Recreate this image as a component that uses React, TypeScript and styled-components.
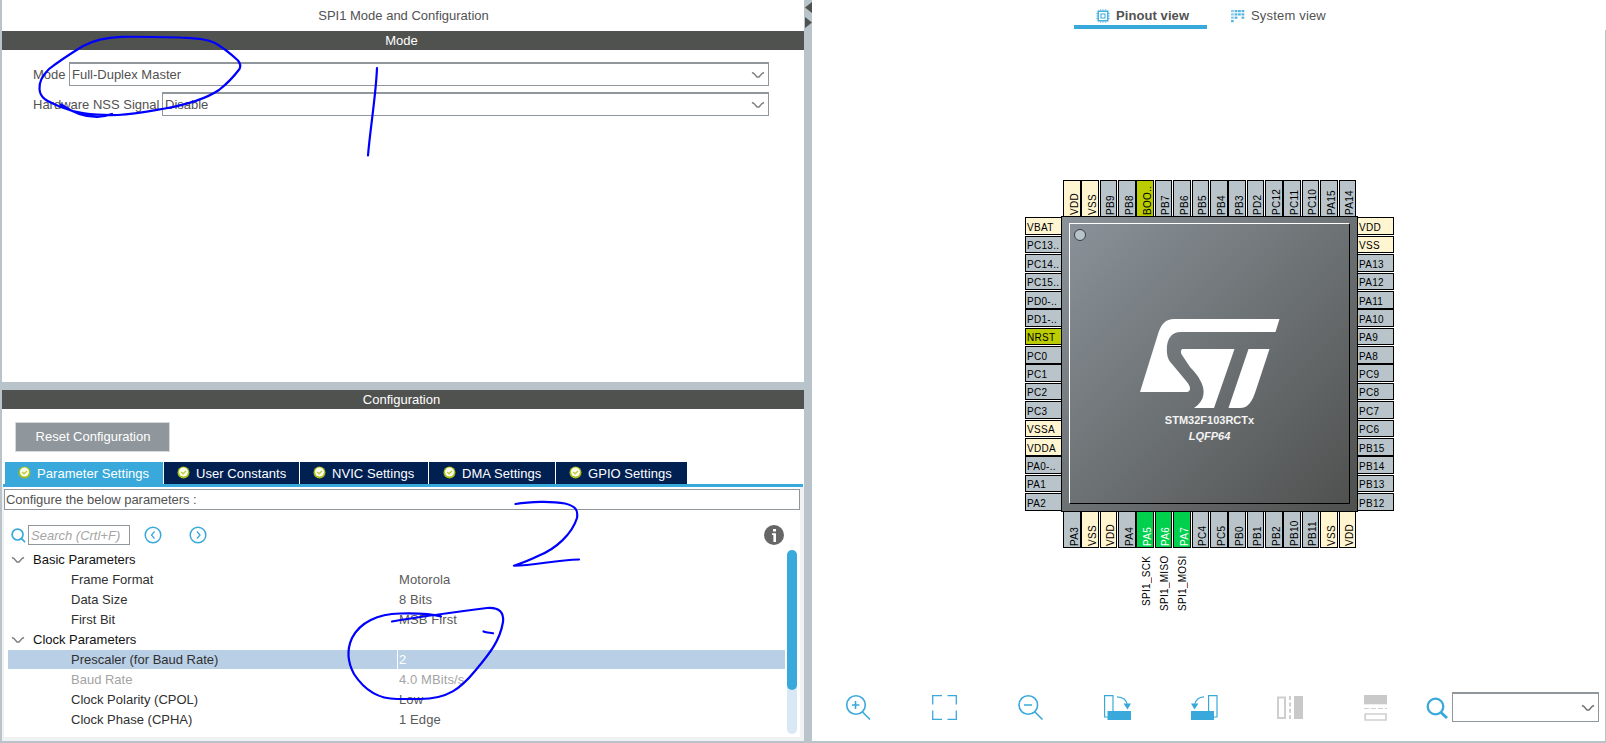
import React from "react";
import styled, { createGlobalStyle, css } from "styled-components";

const Global = createGlobalStyle`
  * { box-sizing: border-box; }
  html, body { margin: 0; padding: 0; }
  body {
    font-family: "Liberation Sans", Arial, sans-serif;
    font-size: 13px;
    color: #525252;
    background: #fff;
  }
`;

const blue = "#39a9dc";
const steel = "#b8c4ca";
const line = "#8f979d";
const dark = "#505250";
const navy = "#002052";

/* ---------- shell ---------- */

const Window = styled.div`
  position: relative;
  display: flex;
  width: 1606px;
  height: 743px;
  overflow: hidden;
  background: ${steel};
`;

const LeftColumn = styled.div`
  display: flex;
  flex-direction: column;
  width: 802px;
  margin-left: 2px;
  height: 741px;
`;

const Splitter = styled.div`
  width: 8px;
  padding: 2px 0 0 1px;
  svg { display: block; }
`;

const RightColumn = styled.div`
  display: flex;
  flex-direction: column;
  width: 794px;
  height: 741px;
  background: #fff;
`;

const PanelTitle = styled.div`
  height: 31px;
  line-height: 31px;
  text-align: center;
  background: #fff;
  padding-left: 1px;
`;

const SectionBar = styled.div`
  height: 19px;
  line-height: 19px;
  text-align: center;
  color: #fff;
  background: ${dark};
  padding-right: 3px;
`;

/* ---------- mode ---------- */

const ModeBody = styled.div`
  height: 332px;
  padding: 12px 35px 0 31px;
  background: #fff;
  display: flex;
  flex-direction: column;
  gap: 6px;
`;

const Field = styled.div`
  display: flex;
  align-items: center;
  height: 24px;
`;

const FieldLabel = styled.label<{ $w: number }>`
  width: ${(p) => p.$w}px;
  white-space: nowrap;
`;

const Combo = styled.div<{ $h?: number }>`
  display: flex;
  flex: 1;
  align-items: center;
  justify-content: space-between;
  height: ${(p) => p.$h ?? 24}px;
  border: 1px solid ${line};
  border-top-width: 2px;
  padding: 0 3px 0 2px;
  background: #fff;
`;

/* ---------- configuration ---------- */

const ConfigPanel = styled.div`
  margin-top: 8px;
  flex: 1;
  display: flex;
  flex-direction: column;
  background: #fff;
`;

const ResetButton = styled.button`
  width: 155px;
  height: 30px;
  margin: 13px 0 0 13px;
  padding: 0 0 1px 1px;
  border: 1px solid #d5d9dc;
  background: #90979c;
  color: #fff;
  font: inherit;
`;

const Tabs = styled.div`
  display: flex;
  gap: 1px;
  margin: 10px 0 0 3px;
  height: 22px;
  letter-spacing: 0.05px;
`;

const Tab = styled.div<{ $w: number; $active?: boolean; $pad: number }>`
  display: flex;
  align-items: center;
  gap: 6px;
  width: ${(p) => p.$w}px;
  padding-left: ${(p) => p.$pad}px;
  color: #fff;
  white-space: nowrap;
  background: ${(p) => (p.$active ? blue : navy)};
`;

const TabBody = styled.div`
  flex: 1;
  display: flex;
  flex-direction: column;
  border: solid #f0f1f3;
  border-width: 0 4px 4px 2px;
`;

const TabLine = styled.div`
  height: 3px;
  margin: 0 1px;
  background: ${blue};
`;

const Hint = styled.div`
  height: 21px;
  margin-top: 2px;
  border: 1px solid ${line};
  line-height: 19px;
  padding-left: 1px;
  letter-spacing: -0.05px;
`;

const SearchRow = styled.div`
  display: flex;
  align-items: center;
  height: 20px;
  margin-top: 15px;
  padding-left: 7px;
  svg { display: block; flex: none; }
`;

const SearchInput = styled.div`
  width: 102px;
  height: 20px;
  margin: 0 14px 0 2px;
  border: 1px solid ${line};
  padding-left: 2px;
  line-height: 19px;
  font-style: italic;
  color: #a5a5a5;
  white-space: nowrap;
`;

const Spacer = styled.div<{ $w?: number }>`
  ${(p) => (p.$w ? css`width: ${p.$w}px;` : css`flex: 1;`)}
`;

const TreeArea = styled.div`
  display: flex;
  margin-top: 5px;
  padding-left: 4px;
`;

const Tree = styled.div`
  width: 777px;
`;

const Row = styled.div<{ $selected?: boolean; $muted?: boolean }>`
  display: flex;
  height: 19px;
  margin-bottom: 1px;
  line-height: 19px;
  background: ${(p) => (p.$selected ? "#b9cfe6" : "transparent")};
  color: ${(p) => (p.$muted ? "#a3a3a3" : "#303030")};
`;

const GroupRow = styled(Row)`
  align-items: center;
  gap: 8px;
  padding-left: 3px;
  color: #111;
`;

const NameCell = styled.div<{ $selected?: boolean }>`
  width: 390px;
  padding-left: 63px;
  border-right: 1px solid ${(p) => (p.$selected ? "#fff" : "transparent")};
`;

const ValueCell = styled.div<{ $tone: string }>`
  padding-left: 1px;
  letter-spacing: 0.1px;
  color: ${(p) => p.$tone};
`;

const ScrollTrack = styled.div`
  width: 10px;
  height: 184px;
  margin-left: 2px;
  border-radius: 5px;
  background: #d9e8f5;
`;

const ScrollThumb = styled.div`
  height: 140px;
  border-radius: 5px;
  background: ${blue};
`;

/* ---------- pinout ---------- */

const ViewTabs = styled.div`
  display: flex;
  height: 30px;
  padding-left: 262px;
`;

const ViewTab = styled.div<{ $active?: boolean }>`
  display: flex;
  align-items: center;
  gap: 6px;
  width: ${(p) => (p.$active ? 133 : 140)}px;
  height: 29px;
  padding: 6px 0 0 ${(p) => (p.$active ? 22 : 24)}px;
  border-bottom: 4px solid ${(p) => (p.$active ? blue : "transparent")};
  font-weight: ${(p) => (p.$active ? 700 : 400)};
  letter-spacing: ${(p) => (p.$active ? 0.08 : 0.18)}px;
  white-space: nowrap;
`;

const Canvas = styled.div`
  flex: 1;
  border-right: 1px solid ${steel};
  padding: 150px 0 0 213px;
`;

const Package = styled.div`
  display: grid;
  grid-template-columns: 36px 297px 36px;
  grid-template-rows: 36px 296px 36px 72px;
`;

const PinColumn = styled.div<{ $side: "left" | "right" }>`
  grid-row: 2;
  grid-column: ${(p) => (p.$side === "left" ? 1 : 3)};
  display: grid;
  grid-template-rows: 19px 18px 19px 18px 18px 19px 18px 18px 19px 18px 19px 18px 18px 19px 18px 18px;
  padding-top: 1px;
  margin-left: ${(p) => (p.$side === "left" ? 0 : -1)}px;
  margin-right: ${(p) => (p.$side === "left" ? -1 : 0)}px;
`;

const PinRow = styled.div<{ $side: "top" | "bottom" }>`
  grid-row: ${(p) => (p.$side === "top" ? 1 : 3)};
  grid-column: 2;
  display: grid;
  grid-template-columns: 18px 19px 18px 18px 19px 18px 19px 18px 18px 19px 18px 18px 19px 18px 19px 17px;
  padding-left: 2px;
  margin-top: ${(p) => (p.$side === "top" ? 0 : -1)}px;
  margin-bottom: ${(p) => (p.$side === "top" ? -1 : 0)}px;
`;

const pinTones = {
  io: ["#b8c4ca", "#000"],
  power: ["#fff5d0", "#000"],
  boot: ["#bbcc01", "#000"],
  used: ["#00d04b", "#fff"],
} as const;
type Tone = keyof typeof pinTones;

const pinBase = css<{ $tone: Tone; $size: number }>`
  border: 1px solid #000;
  background: ${(p) => pinTones[p.$tone][0]};
  color: ${(p) => pinTones[p.$tone][1]};
  font-size: 10px;
  letter-spacing: 0.3px;
  white-space: nowrap;
`;

const SidePin = styled.div<{ $tone: Tone; $size: number }>`
  ${pinBase}
  height: ${(p) => p.$size}px;
  line-height: ${(p) => p.$size * 2 - 16}px;
  padding-left: 1px;
`;

const EdgePin = styled.div<{ $tone: Tone; $size: number }>`
  ${pinBase}
  width: ${(p) => p.$size}px;
  line-height: ${(p) => p.$size}px;
  writing-mode: vertical-rl;
  transform: rotate(180deg);
  padding: 1px ${(p) => p.$size - 16.5}px 0 0;
`;

const Die = styled.div`
  grid-row: 2;
  grid-column: 2;
  position: relative;
  border: 1px solid #000;
  background: linear-gradient(135deg, #8b939a 0%, #4e504e 100%);
  padding: 6px 7px 7px 7px;
`;

const Bevel = styled.div`
  height: 281px;
  border: 1px solid;
  border-color: #fff #000 #000 #fff;
  display: flex;
  flex-direction: column;
  align-items: center;
  color: #f4f4f4;
  font-weight: 700;
  font-size: 11px;
  svg { display: block; }
`;

const PinOneMark = styled.div`
  position: absolute;
  left: 12px;
  top: 12px;
  width: 12px;
  height: 12px;
  border-radius: 50%;
  border: 1px solid #3a3d3f;
  background: ${steel};
`;

const PartName = styled.div`
  margin-top: 5px;
  line-height: 14px;
`;

const PackageName = styled.div`
  margin-top: 2px;
  line-height: 14px;
  font-style: italic;
`;

const SignalRow = styled.div`
  grid-row: 4;
  grid-column: 2;
  display: flex;
  align-items: flex-start;
  padding: 8px 0 0 77px;
`;

const Signal = styled.div<{ $w: number }>`
  width: ${(p) => p.$w}px;
  height: 56px;
  line-height: 18px;
  writing-mode: vertical-rl;
  transform: rotate(180deg);
  text-align: right;
  font-size: 10px;
  letter-spacing: 0.3px;
  color: #000;
  white-space: nowrap;
`;

/* ---------- toolbar ---------- */

const Toolbar = styled.div`
  display: grid;
  grid-template-columns: 86px 86px 86px 87px 86px 87px 62px 26px 147px;
  height: 50px;
  padding: 1px 0 0 34px;
  border-right: 1px solid ${steel};
`;

const ToolIcon = styled.svg`
  display: block;
  width: 28px;
  height: 28px;
  margin-top: 3px;
  overflow: visible;
`;

const Ink = styled.svg`
  position: absolute;
  left: 0;
  top: 0;
  pointer-events: none;
`;

/* ---------- icons ---------- */

const Chevron = ({ color = "#808080" }: { color?: string }) => (
  <svg width="14" height="8" viewBox="0 0 14 8" fill="none" stroke={color} strokeWidth="1.5">
    <path d="M1 1.500 L3 2.500 L6 6 H8 L11 2.500 L13 1.500" />
  </svg>
);

const BadgeIcon = styled.svg`
  display: block;
  width: 13px;
  height: 13px;
  margin-top: -1px;
`;

const CheckBadge = () => (
  <BadgeIcon viewBox="0 0 13 13">
    <circle cx="6.5" cy="6.5" r="6" fill="#a9bf17" />
    <circle cx="6.5" cy="6" r="4.500" fill="#fbfcec" />
    <path d="M4.200 6 L6 7.700 L9 5" fill="none" stroke="#bccd3c" strokeWidth="1.4" />
  </BadgeIcon>
);

const Lens = ({ size, sw }: { size: number; sw: number }) => (
  <svg width={size} height={size} viewBox="0 0 16 16" fill="none" stroke={blue} strokeWidth={sw}>
    <circle cx="7" cy="7" r="5.8" />
    <path d="M11 11 L15 15" />
  </svg>
);

const Step = ({ d }: { d: string }) => (
  <svg width="18" height="18" viewBox="0 0 18 18" fill="none" stroke={blue}>
    <circle cx="9" cy="9" r="7.8" strokeWidth="1.5" />
    <path d={d} strokeWidth="1.3" />
  </svg>
);

const Info = () => (
  <svg width="20" height="20" viewBox="0 0 20 20">
    <circle cx="10" cy="10" r="10" fill="#666" />
    <path d="M9 4h3v2.500h-3z M8 8.300h4v8.700h-2.600v-7h-1.400z" fill="#fff" />
  </svg>
);

const ChipIcon = () => (
  <svg width="14" height="14" viewBox="0 0 14 14" fill="none" stroke={blue}>
    <rect x="2.2" y="2.2" width="9.6" height="9.6" strokeWidth="1.4" />
    <rect x="5" y="5" width="4" height="4" strokeWidth="1" />
    <path d="M4.5 0v2M7 0v2M9.5 0v2M4.5 12v2M7 12v2M9.5 12v2M0 4.5h2M0 7h2M0 9.5h2M12 4.5h2M12 7h2M12 9.5h2" strokeWidth="1" opacity=".6" />
  </svg>
);

const GridIcon = () => (
  <svg width="14" height="14" viewBox="0 0 14 14" fill={blue}>
    {[[0, 1], [3.6, 1], [7, 1], [10.500, 1], [0, 4.3], [3.6, 4.3], [7, 4.3], [10.500, 4.3], [0, 7.6], [3.6, 7.6], [10.500, 7.6], [0, 11]].map(([x, y], i) => (
      <rect key={i} x={x} y={y} width="2.800" height="2.2" opacity={i % 4 === 0 ? 0.6 : 0.85} />
    ))}
  </svg>
);

/* ---------- data ---------- */

type Pin = [string, Tone?];
const leftPins: Pin[] = [["VBAT", "power"], ["PC13.."], ["PC14.."], ["PC15.."], ["PD0-.."], ["PD1-.."], ["NRST", "boot"], ["PC0"], ["PC1"], ["PC2"], ["PC3"], ["VSSA", "power"], ["VDDA", "power"], ["PA0-.."], ["PA1"], ["PA2"]];
const rightPins: Pin[] = [["VDD", "power"], ["VSS", "power"], ["PA13"], ["PA12"], ["PA11"], ["PA10"], ["PA9"], ["PA8"], ["PC9"], ["PC8"], ["PC7"], ["PC6"], ["PB15"], ["PB14"], ["PB13"], ["PB12"]];
const topPins: Pin[] = [["VDD", "power"], ["VSS", "power"], ["PB9"], ["PB8"], ["BOO..", "boot"], ["PB7"], ["PB6"], ["PB5"], ["PB4"], ["PB3"], ["PD2"], ["PC12"], ["PC11"], ["PC10"], ["PA15"], ["PA14"]];
const bottomPins: Pin[] = [["PA3"], ["VSS", "power"], ["VDD", "power"], ["PA4"], ["PA5", "used"], ["PA6", "used"], ["PA7", "used"], ["PC4"], ["PC5"], ["PB0"], ["PB1"], ["PB2"], ["PB10"], ["PB11"], ["VSS", "power"], ["VDD", "power"]];
const sideSizes = [18, 17, 18, 17, 18, 18, 17, 18, 18, 17, 18, 17, 18, 18, 17, 18];
const edgeSizes = [18, 18, 17, 18, 18, 17, 18, 17, 18, 18, 17, 18, 18, 17, 18, 17];

const tabs: [string, number, number][] = [
  ["Parameter Settings", 158, 13],
  ["User Constants", 135, 13],
  ["NVIC Settings", 128, 13],
  ["DMA Settings", 126, 14],
  ["GPIO Settings", 131, 13],
];

const Param = ({ name, value, selected, muted }: { name: string; value: string; selected?: boolean; muted?: boolean }) => (
  <Row $selected={selected} $muted={muted}>
    <NameCell $selected={selected}>{name}</NameCell>
    <ValueCell $tone={selected ? "#fff" : muted ? "#a3a3a3" : "#5a5a5a"}>{value}</ValueCell>
  </Row>
);

export default function App() {
  return (
    <Window>
      <Global />
      <LeftColumn>
        <PanelTitle>SPI1 Mode and Configuration</PanelTitle>
        <SectionBar>Mode</SectionBar>
        <ModeBody>
          <Field>
            <FieldLabel $w={36}>Mode</FieldLabel>
            <Combo>Full-Duplex Master<Chevron /></Combo>
          </Field>
          <Field>
            <FieldLabel $w={129}>Hardware NSS Signal</FieldLabel>
            <Combo>Disable<Chevron /></Combo>
          </Field>
        </ModeBody>
        <ConfigPanel>
          <SectionBar>Configuration</SectionBar>
          <ResetButton>Reset Configuration</ResetButton>
          <Tabs>
            {tabs.map(([label, w, pad], i) => (
              <Tab key={label} $w={w} $pad={pad} $active={i === 0}>
                <CheckBadge />
                {label}
              </Tab>
            ))}
          </Tabs>
          <TabLine />
          <TabBody>
            <Hint>Configure the below parameters :</Hint>
            <SearchRow>
              <Lens size={15} sw={1.8} />
              <SearchInput>Search (Crtl+F)</SearchInput>
              <Step d="M10.5 5.5 L7.5 9 L10.5 12.5" />
              <Spacer $w={27} />
              <Step d="M8 5.5 L11 9 L8 12.5" />
              <Spacer />
              <Info />
              <Spacer $w={16} />
            </SearchRow>
            <TreeArea>
              <Tree>
                <GroupRow><Chevron />Basic Parameters</GroupRow>
                <Param name="Frame Format" value="Motorola" />
                <Param name="Data Size" value="8 Bits" />
                <Param name="First Bit" value="MSB First" />
                <GroupRow><Chevron />Clock Parameters</GroupRow>
                <Param name="Prescaler (for Baud Rate)" value="2" selected />
                <Param name="Baud Rate" value="4.0 MBits/s" muted />
                <Param name="Clock Polarity (CPOL)" value="Low" />
                <Param name="Clock Phase (CPHA)" value="1 Edge" />
              </Tree>
              <ScrollTrack><ScrollThumb /></ScrollTrack>
            </TreeArea>
          </TabBody>
        </ConfigPanel>
      </LeftColumn>

      <Splitter>
        <svg width="7" height="27" viewBox="0 0 7 27" fill={dark}>
          <path d="M7 0v11L0 5.5z M0 15v11l7-5.5z" />
        </svg>
      </Splitter>

      <RightColumn>
        <ViewTabs>
          <ViewTab $active><ChipIcon />Pinout view</ViewTab>
          <ViewTab><GridIcon />System view</ViewTab>
        </ViewTabs>
        <Canvas>
          <Package>
            <PinRow $side="top">
              {topPins.map(([n, t = "io"], i) => <EdgePin key={i} $tone={t} $size={edgeSizes[i]}>{n}</EdgePin>)}
            </PinRow>
            <PinColumn $side="left">
              {leftPins.map(([n, t = "io"], i) => <SidePin key={i} $tone={t} $size={sideSizes[i]}>{n}</SidePin>)}
            </PinColumn>
            <PinColumn $side="right">
              {rightPins.map(([n, t = "io"], i) => <SidePin key={i} $tone={t} $size={sideSizes[i]}>{n}</SidePin>)}
            </PinColumn>
            <PinRow $side="bottom">
              {bottomPins.map(([n, t = "io"], i) => <EdgePin key={i} $tone={t} $size={edgeSizes[i]}>{n}</EdgePin>)}
            </PinRow>
            <Die>
              <PinOneMark />
              <Bevel>
                <svg width="140" height="184" viewBox="1140 224 140 184" fill="#fff">
                  <path d="M1279.5 319 L1275.5 332 H1181 C1170 332 1166 341 1167 353 C1167.500 358 1169 361 1172 364 L1187 382 C1192 388 1190 392 1187 392 H1140 L1158 334 C1161 324 1166 319 1174 319 Z" />
                  <path d="M1183 349 H1234.500 L1214 408 H1194 C1205 401 1206 390 1200 380 C1198 376 1194 371 1190 367 L1182 355 C1180 351.500 1181 349 1183 349 Z" />
                  <path d="M1248.500 349 H1269.500 L1256 390 C1252 402 1248 408 1240 408 H1228.500 Z" />
                </svg>
                <PartName>STM32F103RCTx</PartName>
                <PackageName>LQFP64</PackageName>
              </Bevel>
            </Die>
            <SignalRow>
              <Signal $w={18}>SPI1_SCK</Signal>
              <Signal $w={18}>SPI1_MISO</Signal>
              <Signal $w={19}>SPI1_MOSI</Signal>
            </SignalRow>
          </Package>
        </Canvas>
        <Toolbar>
          <ToolIcon viewBox="0 0 28 28" fill="none" stroke={blue} strokeWidth="1.6">
            <circle cx="10" cy="10" r="9.300" />
            <path d="M9.500 6v8M6 10h7.500M16.500 17l7.500 7.500" />
          </ToolIcon>
          <ToolIcon viewBox="0 0 28 28" fill="none" stroke={blue} strokeWidth="1.3">
            <path d="M.7 9.500V.7H10M15.500.7H24.300V9.500M24.300 15.500V24.300H15.500M10 24.300H.7V15.500" />
          </ToolIcon>
          <ToolIcon viewBox="0 0 28 28" fill="none" stroke={blue} strokeWidth="1.6">
            <circle cx="10.300" cy="10" r="9.300" />
            <path d="M6 10h8M17 17l7.500 7.500" />
          </ToolIcon>
          <ToolIcon viewBox="0 0 28 28" fill="none" stroke={blue} strokeWidth="1.2">
            <path d="M4 22H.6V.6H9V16" />
            <path d="M3.500 16H27V25H3.500z" fill={blue} stroke="none" />
            <path d="M13 1.800C19 2 22.500 5 23.500 10" />
            <path d="M19.500 8.500h7.500l-3.500 6z" fill={blue} stroke="none" />
          </ToolIcon>
          <ToolIcon viewBox="0 0 28 28" fill="none" stroke={blue} strokeWidth="1.2">
            <path d="M17.600 16V.6H26V22H23" />
            <path d="M0 16H23V25H0z" fill={blue} stroke="none" />
            <path d="M13 1.800C7.500 2 4.500 5 3.500 10" />
            <path d="M0 8.500h7.500l-4 6z" fill={blue} stroke="none" />
          </ToolIcon>
          <ToolIcon viewBox="0 0 28 28" fill="none" stroke="#cfcfcf" strokeWidth="2">
            <path d="M1 2.500H8V23H1z" />
            <path d="M13 1V24" strokeDasharray="4 2.400" />
            <path d="M17 1H26V24H17z" fill="#c9c9c9" stroke="none" />
          </ToolIcon>
          <ToolIcon viewBox="0 0 28 28" fill="none" stroke="#cfcfcf" strokeWidth="2">
            <path d="M0 0H23V9.300H0z" fill="#c9c9c9" stroke="none" />
            <path d="M0 13.500H23" strokeDasharray="5 2" strokeWidth="1.200" />
            <path d="M1.200 19H22V25H1.200z" strokeWidth="1.700" />
          </ToolIcon>
          <ToolIcon viewBox="0 0 28 28" fill="none" stroke={blue} strokeWidth="2.300">
            <circle cx="9.500" cy="11.500" r="7.800" />
            <path d="M15 17.500l6 5.500" strokeWidth="3" />
          </ToolIcon>
          <Combo $h={30}><span /><Chevron color="#707070" /></Combo>
        </Toolbar>
      </RightColumn>

      <Ink width="1606" height="743" viewBox="0 0 1606 743" fill="none" stroke="#0000fe" strokeWidth="2.200" strokeLinecap="round" strokeLinejoin="round">
        <path d="M61 104.500 C72 112 84 117 97 117 C104 116.500 108 115.500 112 114 M61 107 C75 113 90 115.500 118 115 C135 114 150 111 165 108.500 C190 104 207 98 219 90 C228 83 235 75 239.500 69 C241 66 240 63 238 60.500 C231 54 222 47 215 43 C206 38.500 195 38.500 180 37.500 C160 37 140 36.500 121 36.800 C105 37.500 92 41 83 46 C70 54 58 62 49 69 C43 75 39 83 39.500 89 C40 98 46 101 61 107" />
        <path d="M377 68 C376 95 370 130 368 155.500" />
        <path d="M515.500 504 C530 501.500 552 501 565 503.500 C577 506.500 578 511 577 518 C572 534 556 549 538 556 C530 560 522 563 514 565.700 C535 565.500 555 560 579 559.500" />
        <path d="M392 621.500 C425 616 455 612 487 608 C500 607 504 613 503 622 C500 640 491 652 475 671 C461 688 448 699 420 699 H397 C376 699 363 688 354 674 C347 661 347 649 352 638 C360 622 378 614 400 613.500 C417 613 430 613.500 441 616.500" />
        <path d="M483.500 631.500 C487 633 490 632.500 493 633.300" />
      </Ink>
    </Window>
  );
}
